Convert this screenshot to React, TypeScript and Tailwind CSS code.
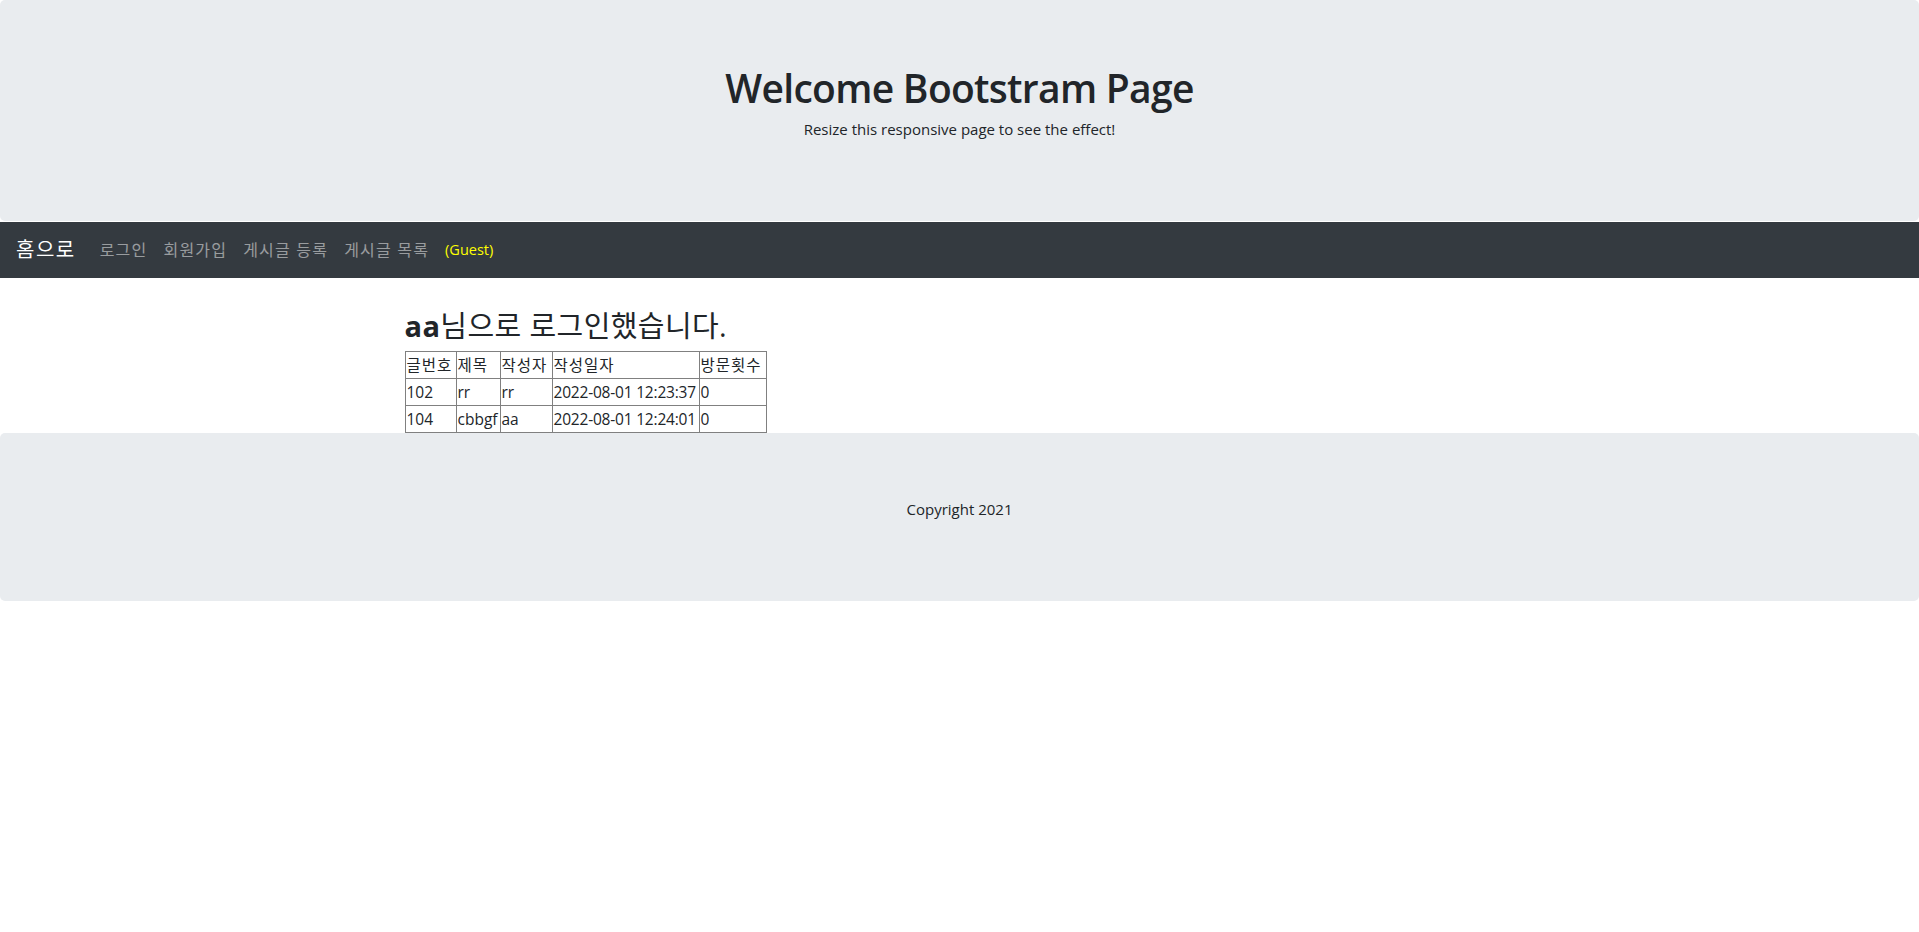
const font = {
  fontFamily: '"Open Sans", "Noto Sans", "Noto Sans CJK KR", sans-serif',
}

const rows = [
  { no: "102", title: "rr", writer: "rr", date: "2022-08-01 12:23:37", hit: "0" },
  { no: "104", title: "cbbgf", writer: "aa", date: "2022-08-01 12:24:01", hit: "0" },
]

const navLinks = ["로그인", "회원가입", "게시글 등록", "게시글 목록"]

export default function App() {
  return (
    <div className="min-h-[932px] bg-white text-[#212529]" style={font}>
      {/* Jumbotron */}
      <div className="h-[221px] rounded-[5px] bg-[#e9ecef] pt-[64px] text-center">
        <h1 className="mb-[5px] text-[39px] font-semibold leading-[48px] tracking-[-0.7px]">
          Welcome Bootstram Page
        </h1>
        <p className="text-[15px] leading-6">
          Resize this responsive page to see the effect!
        </p>
      </div>

      {/* Navbar */}
      <nav className="mt-px flex h-14 items-center bg-[#343a40] px-4">
        <a className="mr-4 text-[20px] leading-[30px] tracking-[1.5px] text-white">홈으로</a>
        {navLinks.map((label) => (
          <a key={label} className="px-2 text-base leading-6 tracking-[1.2px] text-white/50">
            {label}
          </a>
        ))}
        <span className="px-2 text-[14.5px] leading-6 text-[#ffff00]">(Guest)</span>
      </nav>

      {/* Content */}
      <div className="mx-auto w-[1140px] px-[15px] pt-[30px]">
        <h3 className="mb-[8px] text-[29px] font-normal leading-[35px] tracking-[0.4px]">
          <b className="font-bold">aa</b>님으로 로그인했습니다.
        </h3>
        <table className="border-collapse border border-[#808080] text-[15.5px] leading-[26px]">
          <thead>
            <tr>
              <th className="w-[51px] border border-[#808080] px-px text-left font-normal tracking-[1px]">글번호</th>
              <th className="w-[44px] border border-[#808080] px-px text-left font-normal tracking-[1px]">제목</th>
              <th className="w-[52px] border border-[#808080] px-px text-left font-normal tracking-[1px]">작성자</th>
              <th className="w-[147px] border border-[#808080] px-px text-left font-normal tracking-[1px]">작성일자</th>
              <th className="w-[67px] border border-[#808080] px-px text-left font-normal tracking-[1px]">방문횟수</th>
            </tr>
          </thead>
          <tbody>
            {rows.map((r) => (
              <tr key={r.no}>
                <td className="border border-[#808080] px-px">{r.no}</td>
                <td className="border border-[#808080] px-px">{r.title}</td>
                <td className="border border-[#808080] px-px">{r.writer}</td>
                <td className="whitespace-nowrap border border-[#808080] px-px tracking-[-0.2px]">{r.date}</td>
                <td className="border border-[#808080] px-px">{r.hit}</td>
              </tr>
            ))}
          </tbody>
        </table>
      </div>

      {/* Footer */}
      <div className="h-[168px] rounded-[5px] bg-[#e9ecef] pt-[64px] text-center">
        <p className="text-[15px] leading-6">Copyright 2021</p>
      </div>
    </div>
  )
}
